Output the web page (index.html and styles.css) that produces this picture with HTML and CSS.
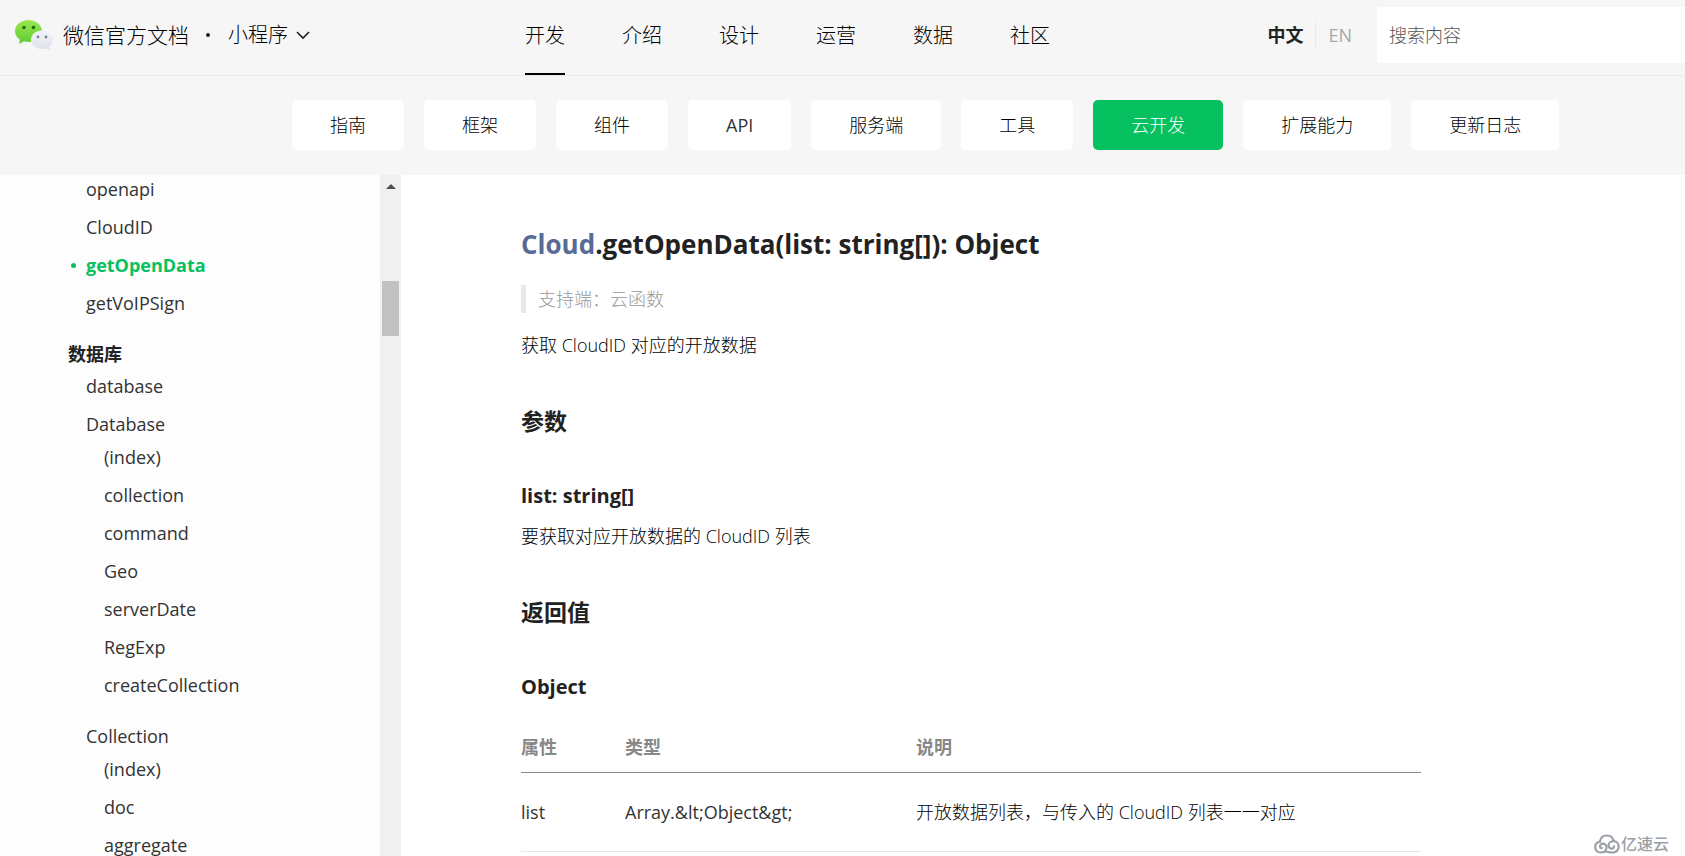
FILE: index.html
```
<!DOCTYPE html>
<html lang="zh-CN">
<head>
<meta charset="utf-8">
<title>Cloud.getOpenData | 微信官方文档</title>
<link rel="stylesheet" href="styles.css">
</head>
<body>
<header class="header">
  <div class="brand">
    <svg class="logo" width="40" height="34" viewBox="0 0 40 34" aria-hidden="true">
      <defs>
        <linearGradient id="green" x1="0" y1="0" x2="0" y2="1"><stop offset="0" stop-color="#9be84e"/><stop offset="1" stop-color="#5fcb33"/></linearGradient>
        <linearGradient id="pale" x1="0" y1="0" x2="0" y2="1"><stop offset="0" stop-color="#f3f4fa"/><stop offset="1" stop-color="#dde0ea"/></linearGradient>
      </defs>
      <path fill="url(#green)" d="M14.500 2C7 2 1 7 1 13.200c0 3.500 1.900 6.500 5 8.600L5 26l5.200-2.700c1.400.4 2.800.6 4.300.6C22 23.900 28 19.200 28 13.200S22 2 14.500 2z"/>
      <path fill="url(#pale)" d="M28 12.500c6.100 0 11 4 11 9.300 0 2.900-1.500 5.400-3.900 7.100l.8 3.100-3.900-1.700c-1.300.4-2.600.6-4 .6-6.100 0-11-4-11-9.100s4.900-9.300 11-9.300z"/>
      <circle cx="10" cy="9.500" r="1.800" fill="#256b1c"/><circle cx="19.500" cy="9.500" r="1.800" fill="#256b1c"/>
      <circle cx="24" cy="19" r="1.400" fill="#7d828c"/><circle cx="32" cy="19" r="1.400" fill="#7d828c"/>
    </svg>
    <a class="brand-name" href="#">微信官方文档</a>
    <span class="brand-dot"></span>
    <button class="product" type="button">小程序
      <svg width="14" height="9" viewBox="0 0 14 9" aria-hidden="true"><path d="M1 1l6 6 6-6" fill="none" stroke="#222" stroke-width="1.600"/></svg>
    </button>
  </div>
  <nav class="topnav">
    <a class="topnav-link active" href="#">开发</a>
    <a class="topnav-link" href="#">介绍</a>
    <a class="topnav-link" href="#">设计</a>
    <a class="topnav-link" href="#">运营</a>
    <a class="topnav-link" href="#">数据</a>
    <a class="topnav-link" href="#">社区</a>
  </nav>
  <div class="tools">
    <div class="lang"><a class="lang-on" href="#">中文</a><a class="lang-off" href="#">EN</a></div>
    <input class="search" type="text" placeholder="搜索内容" aria-label="搜索内容">
  </div>
</header>
<nav class="subnav">
  <a class="chip" href="#">指南</a>
  <a class="chip" href="#">框架</a>
  <a class="chip" href="#">组件</a>
  <a class="chip latin" href="#">API</a>
  <a class="chip" href="#">服务端</a>
  <a class="chip" href="#">工具</a>
  <a class="chip chip-on" href="#">云开发</a>
  <a class="chip" href="#">扩展能力</a>
  <a class="chip" href="#">更新日志</a>
</nav>
<div class="body">
  <aside class="sidebar">
    <div class="tree">
      <ul class="level">
        <li><a href="#">openapi</a></li>
        <li><a href="#">CloudID</a></li>
        <li><a class="current" href="#">getOpenData</a></li>
        <li><a href="#">getVoIPSign</a></li>
      </ul>
      <h2 class="tree-title">数据库</h2>
      <ul class="level">
        <li><a href="#">database</a></li>
        <li><a href="#">Database</a>
          <ul class="level">
            <li><a href="#">(index)</a></li>
            <li><a href="#">collection</a></li>
            <li><a href="#">command</a></li>
            <li><a href="#">Geo</a></li>
            <li><a href="#">serverDate</a></li>
            <li><a href="#">RegExp</a></li>
            <li><a href="#">createCollection</a></li>
          </ul>
        </li>
        <li><a href="#">Collection</a>
          <ul class="level">
            <li><a href="#">(index)</a></li>
            <li><a href="#">doc</a></li>
            <li><a href="#">aggregate</a></li>
          </ul>
        </li>
      </ul>
    </div>
    <div class="scrollbar">
      <svg width="10" height="5" viewBox="0 0 10 5" aria-hidden="true"><path d="M0 5l5-5 5 5z" fill="#505050"/></svg>
      <div class="thumb"></div>
    </div>
  </aside>
  <main class="content">
    <h1><a href="#">Cloud</a>.getOpenData(list: string[]): Object</h1>
    <blockquote>支持端：云函数</blockquote>
    <p>获取 CloudID 对应的开放数据</p>
    <h2>参数</h2>
    <h3>list: string[]</h3>
    <p>要获取对应开放数据的 CloudID 列表</p>
    <h2>返回值</h2>
    <h3>Object</h3>
    <table>
      <thead><tr><th class="col-name">属性</th><th class="col-type">类型</th><th>说明</th></tr></thead>
      <tbody><tr><td class="latin">list</td><td class="latin">Array.&amp;lt;Object&amp;gt;</td><td>开放数据列表，与传入的 CloudID 列表一一对应</td></tr></tbody>
    </table>
  </main>
</div>
<div class="watermark">
  <svg width="26" height="20" viewBox="0 0 26 20" fill="none" stroke="#9a9fa8" stroke-width="2.200" stroke-linecap="round" aria-hidden="true">
    <path d="M6 7.500C6.500 3.500 9.500 1.500 12.800 1.500c3.400 0 6 2 6.700 5.300"/>
    <path d="M6 7.500C3 8.200 1.200 10.500 1.200 13.200c0 3 2.300 5.300 5.600 5.300 5.500 0 5.700-5 5.700-5 0-2.300-1.700-3.800-3.600-3.800-1.700 0-2.900 1.200-2.900 2.500 0 1.200.9 2 2 1.900"/>
    <path d="M9.500 18c1.500-.6 3.500-.5 5 .1 1.200.3 2.500.4 4 .4 3.500 0 6.200-2.500 6.200-5.800 0-3.200-2.400-5.500-5.300-5.500-2.900 0-4.900 2-4.900 4.200 0 1.900 1.400 3.200 3.100 3.200 1.600 0 2.600-1 2.500-2.200"/>
  </svg>
  <span>亿速云</span>
</div>
</body>
</html>
```
FILE: styles.css
```
* { box-sizing: border-box; }
body {
  margin: 0;
  height: 100vh;
  display: flex;
  flex-direction: column;
  overflow: hidden;
  background: #fff;
  color: #222;
  font-family: "Open Sans", "Noto Sans CJK SC", sans-serif;
  font-size: 18px;
  font-weight: 300;
  line-height: 26px;
}
a { color: inherit; text-decoration: none; }
ul { list-style: none; margin: 0; padding: 0; }

.header {
  flex: none;
  display: flex;
  height: 76px;
  background: #f6f6f6;
  border-bottom: 1px solid #ebebeb;
}
.brand { width: 525px; padding: 0 0 5px 14px; display: flex; align-items: center; }
.logo { flex: none; }
.brand-name { margin-left: 9px; font-size: 21px; color: #000; }
.brand-dot { width: 4px; height: 4px; margin: 0 18px 0 17px; border-radius: 50%; background: #222; }
.product {
  display: flex;
  align-items: center;
  gap: 8px;
  padding: 0;
  border: 0;
  background: none;
  color: #000;
  font: inherit;
  font-size: 20px;
}
.topnav { display: flex; gap: 57px; font-size: 20px; color: #000; }
.topnav-link { padding-top: 23px; border-bottom: 2px solid transparent; }
.topnav-link.active { border-color: #000; }
.tools { margin-left: auto; display: flex; align-items: center; padding-bottom: 5px; }
.lang { display: flex; margin-right: 25px; }
.lang-on { padding-right: 12px; font-weight: 700; }
.lang-off { padding-left: 12px; border-left: 1px solid #e8e8e8; color: #a8a8a8; font-weight: 400; }
.search {
  width: 308px;
  height: 56px;
  padding: 0 12px;
  border: 0;
  border-radius: 3px 0 0 3px;
  background: #fff;
  font: inherit;
}
.search::placeholder { color: #555; }

.subnav { flex: none; display: flex; gap: 20px; padding: 24px 0 25px 292px; background: #f6f6f6; }
.chip { padding: 12px 38px; border-radius: 5px; background: #fff; color: #000; }
.chip-on { background: #07c160; color: #fff; }

.body { flex: 1; min-height: 0; display: flex; }
.sidebar { flex: none; width: 401px; display: flex; background: #fdfdfd; overflow: hidden; }
.tree { flex: 1; padding: 1px 0 0 68px; color: #333; font-weight: 400; }
.level { padding-left: 18px; }
.level li { margin-bottom: 12px; }
.level .level { padding-top: 7px; }
.level .level li:last-child { margin-bottom: 25px; }
.level a { display: block; }
.level .current { color: #07c160; font-weight: 700; }
.current::before {
  content: "";
  float: left;
  width: 5px;
  height: 5px;
  margin: 11px 0 0 -15px;
  border-radius: 50%;
  background: #07c160;
}
.tree-title { margin: 25px 0 6px; font-size: 18px; font-weight: 700; color: #222; }
.scrollbar {
  width: 21px;
  display: flex;
  flex-direction: column;
  align-items: center;
  padding-top: 9px;
  background: #f0f0f0;
}
.thumb { width: 17px; height: 55px; margin-top: 92px; background: #c1c1c1; }

.content { flex: 1; padding: 49px 264px 0 120px; color: #000; }
h1, h2, h3, p, blockquote { margin: 0; }
.content h1 { font-size: 26px; font-weight: 700; line-height: 40px; color: #222; }
.content h1 a { color: #576b95; }
.content blockquote { margin-top: 21px; padding-left: 12px; border-left: 5px solid #e8e8e8; color: #999; line-height: 28px; }
.content p { margin-top: 19px; }
.content h2 { margin-top: 47px; font-size: 23px; font-weight: 700; line-height: 32px; color: #222; }
.content h3 { margin-top: 43px; font-size: 20px; font-weight: 700; line-height: 32px; color: #222; }
.content h3 + p { margin-top: 11px; }
table { width: 100%; margin-top: 31px; border-collapse: separate; border-spacing: 0; table-layout: fixed; }
th, td { padding: 0; text-align: left; vertical-align: top; }
th { padding-bottom: 12px; border-bottom: 1px solid #888; color: #888; font-weight: 700; }
td { padding: 26px 0; border-bottom: 1px solid #e5e5e5; }
.col-name { width: 104px; }
.col-type { width: 291px; }
.latin { color: #333; font-weight: 400; }

.watermark {
  position: absolute;
  right: 16px;
  bottom: 2px;
  display: flex;
  align-items: center;
  gap: 1px;
  color: #9a9fa8;
  font-size: 16px;
  font-weight: 500;
  line-height: 20px;
}
```
